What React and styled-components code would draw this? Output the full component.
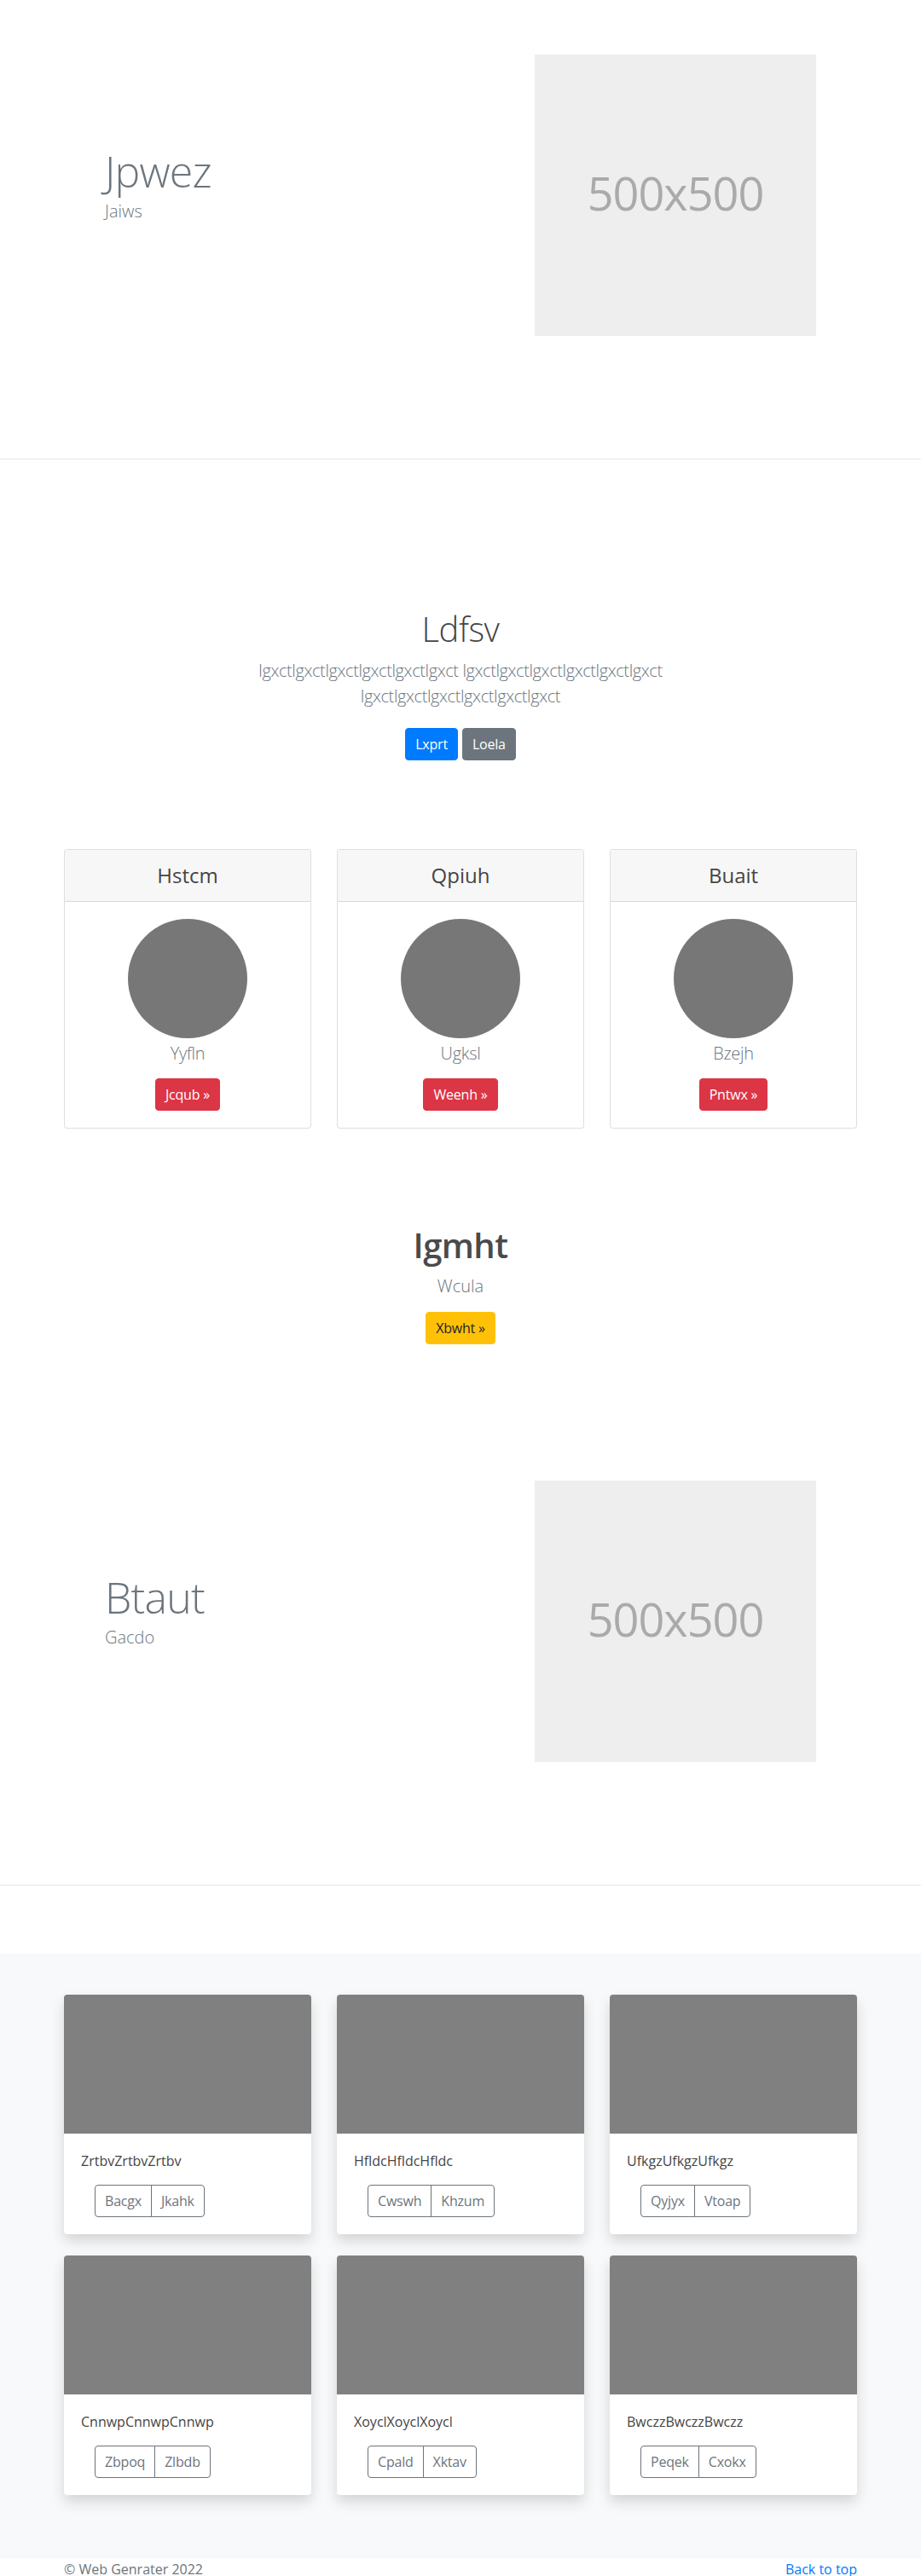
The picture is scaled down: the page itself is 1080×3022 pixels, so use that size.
import React from "react";
import styled, { createGlobalStyle } from "styled-components";

const Global = createGlobalStyle`
  * { box-sizing: border-box; }
  html, body { margin: 0; padding: 0; background: #fff; }
  body {
    font-family: "Open Sans", "Noto Sans", "Liberation Sans", sans-serif;
    font-size: 16px;
    line-height: 1.5;
    color: #212529;
  }
  h1, h2, h3, h4, p { margin: 0; }
  a { text-decoration: none; }
`;

const Container = styled.div`
  width: 930px;
  margin: 0 auto;
`;

const Featurette = styled.section`
  padding: 64px 0;
`;

const FeatRow = styled(Container)`
  display: grid;
  grid-template-columns: 1fr 1fr;
  column-gap: 30px;
  align-items: start;
`;

const FeatText = styled.div`
  padding-left: 48px;
`;

const FeatHeading = styled.h2`
  margin-top: 112px;
  font-size: 50px;
  font-weight: 300;
  line-height: 1;
  letter-spacing: -0.8px;
  color: #6c757d;
`;

const FeatLead = styled.p`
  margin-top: 7px;
  font-size: 20px;
  font-weight: 300;
  line-height: 30px;
  color: #6c757d;
`;

const FeatMedia = styled.div`
  display: flex;
  justify-content: flex-end;
  padding-right: 48px;
`;

const Placeholder = styled.div`
  width: 330px;
  height: 330px;
  background: #eeeeee;
  color: #aaaaaa;
  display: flex;
  align-items: center;
  justify-content: center;
  font-size: 54px;
  font-weight: 400;
  letter-spacing: -1px;
  padding-bottom: 6px;
`;

const Divider = styled.hr`
  margin: 80px 0;
  border: 0;
  border-top: 1px solid #e5e5e5;
  height: 0;
`;

const Hero = styled.section`
  padding-top: 95px;
  text-align: center;
`;

const HeroTitle = styled.h1`
  font-size: 40px;
  font-weight: 300;
  line-height: 48px;
  letter-spacing: -0.5px;
  color: #454545;
  margin-bottom: 10px;
`;

const HeroLead = styled.p`
  font-size: 20px;
  font-weight: 300;
  line-height: 30px;
  letter-spacing: -0.4px;
  color: #6c757d;
`;

const ButtonRow = styled.div`
  display: flex;
  justify-content: center;
  gap: 5px;
  margin-top: 22px;
`;

const Btn = styled.a`
  display: inline-flex;
  align-items: center;
  justify-content: center;
  height: 38px;
  padding: 0 11px;
  border-radius: 4px;
  border: 1px solid ${(p) => p.$bg};
  background: ${(p) => p.$bg};
  color: ${(p) => p.$fg || "#fff"};
  font-size: 16px;
  font-weight: 400;
  line-height: 24px;
  letter-spacing: -0.2px;
  white-space: nowrap;
`;

const PriceGrid = styled(Container)`
  display: grid;
  grid-template-columns: repeat(3, 290px);
  column-gap: 30px;
  margin-top: 104px;
`;

const PriceCard = styled.div`
  border: 1px solid rgba(0, 0, 0, 0.125);
  border-radius: 4px;
  background: #fff;
  overflow: hidden;
`;

const PriceHeader = styled.div`
  background: #f7f7f7;
  border-bottom: 1px solid rgba(0, 0, 0, 0.125);
  padding: 16px 20px;
  text-align: center;
`;

const PriceTitle = styled.h4`
  font-size: 24px;
  font-weight: 400;
  line-height: 28px;
  color: #454545;
`;

const PriceBody = styled.div`
  padding: 20px;
  display: flex;
  flex-direction: column;
  align-items: center;
`;

const Avatar = styled.div`
  width: 140px;
  height: 140px;
  border-radius: 50%;
  background: #777777;
`;

const AvatarName = styled.p`
  margin-top: 3px;
  margin-bottom: 14px;
  font-size: 20px;
  font-weight: 300;
  line-height: 30px;
  letter-spacing: -0.3px;
  color: #6c757d;
`;

const Callout = styled.section`
  margin-top: 113px;
  padding-bottom: 96px;
  text-align: center;
`;

const CalloutTitle = styled.h1`
  font-size: 40px;
  font-weight: 600;
  line-height: 48px;
  letter-spacing: -0.6px;
  color: #4a4a4a;
`;

const CalloutLead = styled.p`
  margin-top: 9px;
  font-size: 20px;
  font-weight: 300;
  line-height: 30px;
  color: #6c757d;
`;

const CalloutAction = styled.div`
  margin-top: 15px;
  display: flex;
  justify-content: center;
`;

const Album = styled.section`
  background: #f8f9fa;
  padding: 48px 0 50px;
`;

const AlbumGrid = styled(Container)`
  display: grid;
  grid-template-columns: repeat(3, 290px);
  column-gap: 30px;
  row-gap: 25px;
  padding-bottom: 24px;
`;

const AlbumCard = styled.div`
  background: #fff;
  border-radius: 4px;
  overflow: hidden;
  box-shadow: 0 8px 16px rgba(0, 0, 0, 0.15);
`;

const Thumb = styled.div`
  height: 163px;
  background: #808080;
`;

const AlbumBody = styled.div`
  padding: 20px;
`;

const AlbumText = styled.p`
  font-size: 16px;
  line-height: 24px;
  color: #454545;
  margin-bottom: 16px;
`;

const BtnGroup = styled.div`
  display: inline-flex;
  margin-left: 16px;
`;

const OutlineBtn = styled.button`
  height: 38px;
  padding: 0 11px;
  font-family: inherit;
  font-size: 16px;
  line-height: 24px;
  letter-spacing: -0.2px;
  color: #6c757d;
  background: transparent;
  border: 1px solid #6c757d;
  border-radius: 0;
  cursor: pointer;
  &:first-child {
    border-radius: 4px 0 0 4px;
  }
  &:last-child {
    border-radius: 0 4px 4px 0;
    margin-left: -1px;
  }
`;

const Footer = styled.footer`
  padding-top: 1px;
`;

const FooterRow = styled(Container)`
  display: flex;
  justify-content: space-between;
  font-size: 16px;
  line-height: 24px;
  color: #6c757d;
`;

const FooterLink = styled.a`
  color: #007bff;
`;

const featurettes = {
  a: { title: "Jpwez", lead: "Jaiws" },
  b: { title: "Btaut", lead: "Gacdo" },
};

const pricing = [
  { title: "Hstcm", name: "Yyfln", action: "Jcqub »" },
  { title: "Qpiuh", name: "Ugksl", action: "Weenh »" },
  { title: "Buait", name: "Bzejh", action: "Pntwx »" },
];

const album = [
  { text: "ZrtbvZrtbvZrtbv", a: "Bacgx", b: "Jkahk" },
  { text: "HfldcHfldcHfldc", a: "Cwswh", b: "Khzum" },
  { text: "UfkgzUfkgzUfkgz", a: "Qyjyx", b: "Vtoap" },
  { text: "CnnwpCnnwpCnnwp", a: "Zbpoq", b: "Zlbdb" },
  { text: "XoyclXoyclXoycl", a: "Cpald", b: "Xktav" },
  { text: "BwczzBwczzBwczz", a: "Peqek", b: "Cxokx" },
];

function FeatSection({ data }) {
  return (
    <Featurette>
      <FeatRow>
        <FeatText>
          <FeatHeading>{data.title}</FeatHeading>
          <FeatLead>{data.lead}</FeatLead>
        </FeatText>
        <FeatMedia>
          <Placeholder>500x500</Placeholder>
        </FeatMedia>
      </FeatRow>
    </Featurette>
  );
}

export default function App() {
  return (
    <>
      <Global />
      <FeatSection data={featurettes.a} />
      <Divider />

      <Hero>
        <Container>
          <HeroTitle>Ldfsv</HeroTitle>
          <HeroLead>
            lgxctlgxctlgxctlgxctlgxctlgxct lgxctlgxctlgxctlgxctlgxctlgxct
            <br />
            lgxctlgxctlgxctlgxctlgxctlgxct
          </HeroLead>
          <ButtonRow>
            <Btn href="#" $bg="#007bff">Lxprt</Btn>
            <Btn href="#" $bg="#6c757d">Loela</Btn>
          </ButtonRow>
        </Container>
      </Hero>

      <PriceGrid>
        {pricing.map((p) => (
          <PriceCard key={p.title}>
            <PriceHeader>
              <PriceTitle>{p.title}</PriceTitle>
            </PriceHeader>
            <PriceBody>
              <Avatar />
              <AvatarName>{p.name}</AvatarName>
              <Btn href="#" $bg="#dc3545">{p.action}</Btn>
            </PriceBody>
          </PriceCard>
        ))}
      </PriceGrid>

      <Callout>
        <CalloutTitle>Igmht</CalloutTitle>
        <CalloutLead>Wcula</CalloutLead>
        <CalloutAction>
          <Btn href="#" $bg="#ffc107" $fg="#212529">Xbwht »</Btn>
        </CalloutAction>
      </Callout>

      <FeatSection data={featurettes.b} />
      <Divider />

      <Album>
        <AlbumGrid>
          {album.map((c) => (
            <AlbumCard key={c.text}>
              <Thumb />
              <AlbumBody>
                <AlbumText>{c.text}</AlbumText>
                <BtnGroup>
                  <OutlineBtn>{c.a}</OutlineBtn>
                  <OutlineBtn>{c.b}</OutlineBtn>
                </BtnGroup>
              </AlbumBody>
            </AlbumCard>
          ))}
        </AlbumGrid>
      </Album>

      <Footer>
        <FooterRow>
          <span>© Web Genrater 2022</span>
          <FooterLink href="#">Back to top</FooterLink>
        </FooterRow>
      </Footer>
    </>
  );
}
